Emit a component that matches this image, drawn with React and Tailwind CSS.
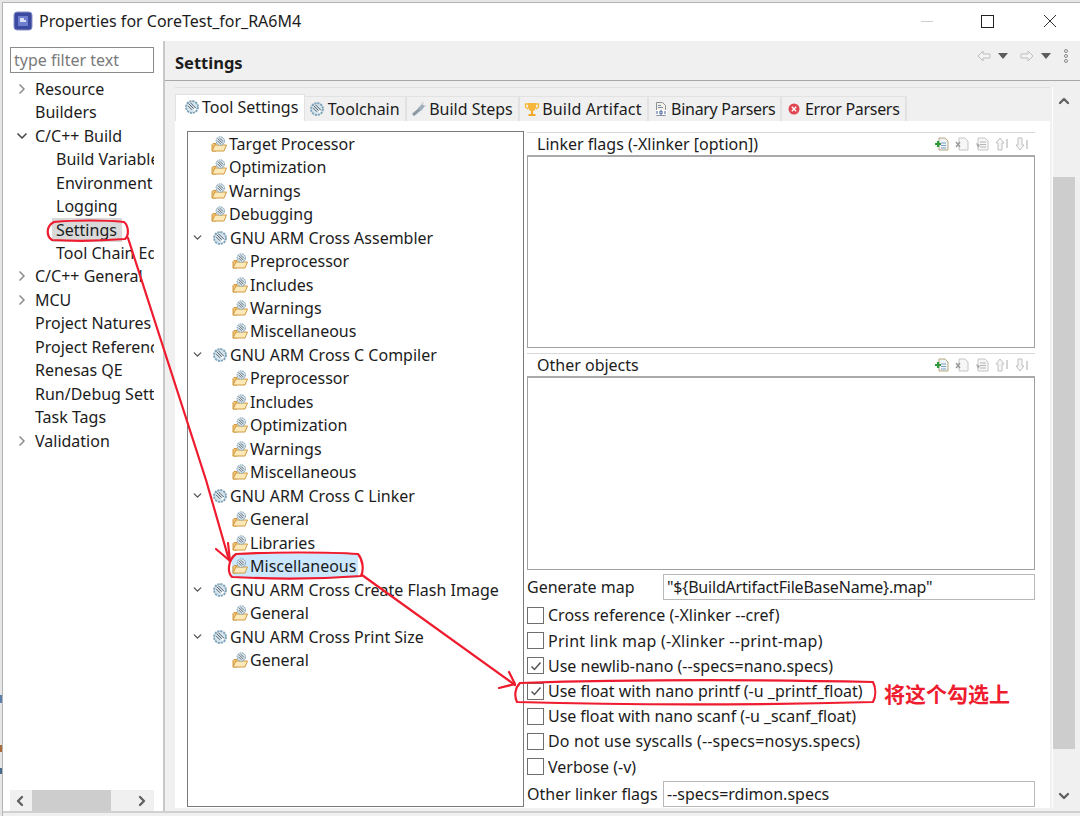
import { Fragment } from "react";
import { ChevronRight, ChevronDown, ChevronUp, ChevronLeft } from "lucide-react";

const leftTree = [
  { label: "Resource", arrow: "right" },
  { label: "Builders" },
  { label: "C/C++ Build", arrow: "down" },
  { label: "Build Variables", sub: true },
  { label: "Environment", sub: true },
  { label: "Logging", sub: true },
  { label: "Settings", sub: true, selected: true },
  { label: "Tool Chain Editor", sub: true },
  { label: "C/C++ General", arrow: "right" },
  { label: "MCU", arrow: "right" },
  { label: "Project Natures" },
  { label: "Project References" },
  { label: "Renesas QE" },
  { label: "Run/Debug Settings" },
  { label: "Task Tags" },
  { label: "Validation", arrow: "right" },
];

const settingsTree = [
  { label: "Target Processor", top: true },
  { label: "Optimization", top: true },
  { label: "Warnings", top: true },
  { label: "Debugging", top: true },
  { label: "GNU ARM Cross Assembler", tool: true },
  { label: "Preprocessor" },
  { label: "Includes" },
  { label: "Warnings" },
  { label: "Miscellaneous" },
  { label: "GNU ARM Cross C Compiler", tool: true },
  { label: "Preprocessor" },
  { label: "Includes" },
  { label: "Optimization" },
  { label: "Warnings" },
  { label: "Miscellaneous" },
  { label: "GNU ARM Cross C Linker", tool: true },
  { label: "General" },
  { label: "Libraries" },
  { label: "Miscellaneous", selected: true },
  { label: "GNU ARM Cross Create Flash Image", tool: true },
  { label: "General" },
  { label: "GNU ARM Cross Print Size", tool: true },
  { label: "General" },
];

const options = [
  { label: "Cross reference (-Xlinker --cref)" },
  { label: "Print link map (-Xlinker --print-map)", track: "tracking-[0.26px]" },
  { label: "Use newlib-nano (--specs=nano.specs)", checked: true },
  { label: "Use float with nano printf (-u _printf_float)", checked: true },
  { label: "Use float with nano scanf (-u _scanf_float)", track: "tracking-[-0.06px]" },
  { label: "Do not use syscalls (--specs=nosys.specs)", track: "tracking-[0.15px]" },
  { label: "Verbose (-v)" },
];

function ToolIcon({ className = "" }) {
  return (
    <svg viewBox="0 0 16 16" className={`w-4 h-4 shrink-0 ${className}`}>
      <circle cx="8" cy="8" r="6" fill="#d5e3ec" stroke="#7ea3b8" strokeWidth="1.800" strokeDasharray="2.200 0.900" />
      <path d="M4.500 4.500l6.500 6.500M6.500 3.800l5.500 5.500M4 6.800l4 4" stroke="#5a6772" strokeWidth="1" />
      <circle cx="10.500" cy="10.500" r="1.200" fill="#fff" />
    </svg>
  );
}

function FolderIcon({ className = "" }) {
  return (
    <svg viewBox="0 0 16 16" className={`w-4 h-4 shrink-0 ${className}`}>
      <path d="M1 15V8.500l1-1h3v7.500z" fill="#f0c272" stroke="#d09a42" />
      <path d="M1 15l3-6h11.500L13 15z" fill="#fde9b8" stroke="#d09a42" />
      <circle cx="9.300" cy="5" r="4.200" fill="#dbe7ee" stroke="#7c9fb3" strokeDasharray="1.800 0.700" />
      <path d="M7 2.800l4.500 4.500M8.800 2.200l3.200 3.200M6.500 4.800l3 3" stroke="#56636e" strokeWidth="0.900" />
    </svg>
  );
}

function WrenchIcon() {
  return (
    <svg viewBox="0 0 16 16" className="w-4 h-4 shrink-0">
      <path d="M2 14l7-6" stroke="#8d9ba6" strokeWidth="3" />
      <path d="M7 7l4-4 3 2-4 5z" fill="#9fb0bc" />
      <path d="M10 2h3M13 5h2" stroke="#c2cdd5" />
    </svg>
  );
}

function TrophyIcon() {
  return (
    <svg viewBox="0 0 16 16" className="w-4 h-4 shrink-0">
      <path d="M4 2h8v5l-2 3H6L4 7z" fill="#f6b73c" />
      <path d="M4 3H1.500v3L4 8M12 3h2.500v3L12 8" fill="none" stroke="#f6b73c" strokeWidth="1.300" />
      <path d="M7 10h2v3H7zM4.500 13h7v2h-7z" fill="#f0a92c" />
    </svg>
  );
}

function BinaryIcon() {
  return (
    <svg viewBox="0 0 16 16" className="w-4 h-4 shrink-0">
      <path d="M3.500 1.500h6l3 3v10h-9z" fill="#f4f1e6" stroke="#8a8f9c" />
      <path d="M5 4.500h3M5 6.500h5" stroke="#7b8aa5" />
      <path d="M3 9h11v5H3z" fill="#fff" />
      <path d="M4 10v3M7 10h2v3H7zM12 10v3" stroke="#3d5a92" fill="none" />
    </svg>
  );
}

function ErrorIcon() {
  return (
    <svg viewBox="0 0 16 16" className="w-4 h-4 shrink-0">
      <circle cx="8" cy="8" r="5.500" fill="#e0464f" />
      <path d="M5.800 5.800l4.400 4.400M10.200 5.800l-4.400 4.400" stroke="#fff" strokeWidth="1.400" />
    </svg>
  );
}

function NavIcons() {
  return (
    <div className="ml-auto mr-[11px] mb-[14px] flex items-center gap-[7px]">
      <svg viewBox="0 0 14 12" className="w-[14px] h-3">
        <path d="M6 1L1 6l5 5V8h7V4H6z" fill="#f4f4f4" stroke="#bdbdbd" />
      </svg>
      <svg viewBox="0 0 10 6" className="w-[10px] h-[6px] mr-[5px]">
        <path d="M0 0h10L5 6z" fill="#5c5c5c" />
      </svg>
      <svg viewBox="0 0 14 12" className="w-[14px] h-3">
        <path d="M8 1l5 5-5 5V8H1V4h7z" fill="#f4f4f4" stroke="#bdbdbd" />
      </svg>
      <svg viewBox="0 0 10 6" className="w-[10px] h-[6px] mr-[5px]">
        <path d="M0 0h10L5 6z" fill="#5c5c5c" />
      </svg>
      <svg viewBox="0 0 6 14" className="w-[6px] h-[14px]">
        <circle cx="3" cy="2" r="1.500" fill="none" stroke="#8a8a8a" />
        <circle cx="3" cy="7" r="1.500" fill="none" stroke="#8a8a8a" />
        <circle cx="3" cy="12" r="1.500" fill="none" stroke="#8a8a8a" />
      </svg>
    </div>
  );
}

function ListTools() {
  return (
    <div className="ml-auto mr-[6px] flex items-center gap-[6px]">
      <svg viewBox="0 0 14 14" className="w-[14px] h-[14px]">
        <path d="M4 1h6l3 3v9H4z" fill="#eef3f6" stroke="#b7a77e" />
        <path d="M6 6h5M6 8.500h5M6 11h5" stroke="#7ba0c0" />
        <path d="M3 4v6M0 7h6" stroke="#2f9a3c" strokeWidth="2.200" />
      </svg>
      <svg viewBox="0 0 14 14" className="w-[14px] h-[14px]">
        <path d="M4 1h6l3 3v9H4z" fill="#f6f6f6" stroke="#c6c6c6" />
        <path d="M1 5l4 5M5 5l-4 5" stroke="#9c9c9c" strokeWidth="1.500" />
      </svg>
      <svg viewBox="0 0 14 14" className="w-[14px] h-[14px]">
        <path d="M3 1h7l3 3v9H3z" fill="#f6f6f6" stroke="#c6c6c6" />
        <path d="M5 5h6M5 7.500h6M5 10h6" stroke="#b5b5b5" />
        <path d="M1 6l4 2-2 3z" fill="#a8a8a8" />
      </svg>
      <svg viewBox="0 0 14 14" className="w-[14px] h-[14px]">
        <path d="M5 1l4 5H7v7H3V6H1z" fill="#f6f6f6" stroke="#c0c0c0" />
        <path d="M12 2v9" stroke="#c6c6c6" strokeWidth="1.500" />
      </svg>
      <svg viewBox="0 0 14 14" className="w-[14px] h-[14px]">
        <path d="M5 13l4-5H7V1H3v7H1z" fill="#f6f6f6" stroke="#c0c0c0" />
        <path d="M12 3v9" stroke="#c6c6c6" strokeWidth="1.500" />
      </svg>
    </div>
  );
}

function ListPane({ title, height }) {
  return (
    <div className="flex flex-col">
      <div className="h-[25px] flex items-center pl-[10px] border-t border-[#d8d8d8] border-b-2 border-b-[#a9a9a9]">
        <span>{title}</span>
        <ListTools />
      </div>
      <div className={`${height} border border-[#a0a0a0] border-t-0 bg-white`} />
    </div>
  );
}

const Tab = ({ icon, label, active, track = "" }) => (
  <div
    className={
      active
        ? "h-[27px] -mt-[2px] pb-[2px] flex items-center gap-[2px] pl-[8px] pr-[6px] bg-white border-t border-x border-[#e2e2e2]"
        : "h-[25px] flex items-center gap-[2.5px] pl-[4px] pr-[5px] bg-[#f0f0f0] border-r-2 border-t border-[#e2e2e2]"
    }
  >
    {icon}
    <span className={track}>{label}</span>
  </div>
);

const Redline = () => (
  <svg className="absolute inset-0 pointer-events-none" width="1080" height="816" viewBox="0 0 1080 816" fill="none">
    <g stroke="#ee1c2e" strokeWidth="2.200" strokeLinecap="round" strokeLinejoin="round">
      {/* Settings ring */}
      <path d="M54 222C75 220 105 220 124 222C129 226 129 236 125 239C100 241 70 241 52 240C46 236 46 226 54 222Z" />
      <path d="M128 238L206 480L229 560" />
      <path d="M216 549L230 561L228 543" />
      {/* Miscellaneous ring */}
      <path d="M236 554C270 552 330 552 358 554C363 560 364 570 361 576C320 579 270 579 232 577C227 572 228 560 236 554Z" />
      <path d="M362 575L515 685" />
      <path d="M499 688L515 684L509 672" />
      {/* float option ring */}
      <path d="M520 683C640 679 780 680 873 682C876 688 876 696 873 702C760 705 620 705 517 702C514 696 515 688 520 683Z" />
    </g>
  </svg>
);

export default function App() {
  return (
    <div
      className="relative w-[1080px] h-[816px] overflow-hidden flex pt-[2px] pl-[2px] bg-[#e6e6e6] text-[16px] text-[#1c1c1c]"
      style={{ fontFamily: '"Noto Sans", "Open Sans", sans-serif' }}
    >
      {/* bits of the desktop behind the dialog */}
      <div className="absolute left-0 top-[695px] w-[2px] h-[8px] bg-[#5b7fa8]" />
      <div className="absolute left-0 top-[745px] w-[2px] h-[7px] bg-[#a86a3a]" />
      <div className="absolute left-0 top-[768px] w-[2px] h-[6px] bg-[#4a6a8a]" />

      <div className="flex-1 min-w-0 flex flex-col bg-[#f0f0f0] border-t border-l border-[#b4b4b4]">
        {/* Title bar */}
        <div className="h-[38px] pb-[2px] bg-white flex items-center shrink-0">
          <svg viewBox="0 0 20 20" className="w-5 h-5 ml-[10px] mr-[6px]">
            <rect x="1" y="1" width="18" height="18" rx="3" fill="#3b4aa0" stroke="#8c93c8" />
            <rect x="5" y="5" width="10" height="10" fill="#6f7fd0" />
            <path d="M7 10h6M7 8h4" stroke="#fff" strokeWidth="1.500" />
          </svg>
          <span>Properties for CoreTest_for_RA6M4</span>
          <div className="ml-auto flex items-center">
            <div className="w-3 h-px bg-[#cfcfcf] mr-[48px]" />
            <div className="w-[13px] h-[13px] border border-[#222] mr-[49px]" />
            <svg viewBox="0 0 14 14" className="w-[14px] h-[14px] mr-[23px]">
              <path d="M1 1l12 12M13 1L1 13" stroke="#333" strokeWidth="1" />
            </svg>
          </div>
        </div>

        <div className="flex flex-1 min-h-0">
          {/* Left filter panel */}
          <div className="w-[162px] shrink-0 bg-white flex flex-col pl-[7px] pr-[9px] pt-[6px] border-r-2 border-[#c8c8c8]">
            <div className="h-[26px] border border-[#8a8a8a] flex items-center pl-[3px] text-[#7a7a7a] shrink-0">type filter text</div>
            <div className="mt-[4px] flex-1 overflow-hidden">
              {leftTree.map((item) => (
                <div key={item.label} className="relative h-[23.47px] flex items-center whitespace-nowrap">
                  {item.arrow === "right" && <ChevronRight size={16} strokeWidth={2.500} className="absolute left-[4px] text-[#8f8f8f]" />}
                  {item.arrow === "down" && <ChevronDown size={16} strokeWidth={2.500} className="absolute left-[4px] text-[#4a4a4a]" />}
                  {item.selected ? (
                    <span className="ml-[42px] pl-[4px] pr-[5px] bg-[#d9d9d9]">{item.label}</span>
                  ) : (
                    <span className={item.sub ? "ml-[46px]" : "ml-[25px]"}>{item.label}</span>
                  )}
                </div>
              ))}
            </div>
            <div className="h-[21px] bg-[#f0f0f0] flex items-center shrink-0">
              <ChevronLeft size={16} strokeWidth={3.500} className="ml-[2px] text-[#606060]" />
              <div className="w-[79px] h-full bg-[#cdcdcd] ml-[4px] mr-auto" />
              <ChevronRight size={16} strokeWidth={3.500} className="mr-[4px] text-[#606060]" />
            </div>
          </div>

          {/* Right page */}
          <div className="flex-1 min-w-0 flex flex-col bg-[#f0f0f0] pb-[3px]">
            <div className="h-[40px] pt-[5px] flex items-center pl-[10px] border-b border-[#a8a8a8] shrink-0">
              <span className="font-bold text-[16.5px]">Settings</span>
              <NavIcons />
            </div>
            <div className="flex flex-1 min-h-0 pt-[6px] pl-[10px]">
              <div className="w-[875px] flex flex-col border-t border-[#e0e0e0] pt-[8px]">
                <div className="flex h-[25px] shrink-0 items-end">
                  <Tab active icon={<ToolIcon />} label="Tool Settings" />
                  <Tab icon={<ToolIcon />} label="Toolchain" />
                  <Tab icon={<WrenchIcon />} label="Build Steps" />
                  <Tab icon={<TrophyIcon />} label="Build Artifact" track="tracking-[0.15px]" />
                  <Tab icon={<BinaryIcon />} label="Binary Parsers" track="tracking-[-0.3px]" />
                  <Tab icon={<ErrorIcon />} label="Error Parsers" track="tracking-[-0.3px]" />
                </div>
                <div className="flex-1 min-h-0 bg-white flex pt-[10px] pl-[12px] pb-[1px] overflow-hidden">
                  {/* Tool tree */}
                  <div className="w-[337px] shrink-0 border border-[#7a7a7a]">
                    {settingsTree.map((item, i) => (
                      <div key={i} className="relative h-[23.47px] flex items-center whitespace-nowrap">
                        {item.tool && <ChevronDown size={13} strokeWidth={2.500} className="absolute left-[3px] text-[#555]" />}
                        {item.tool ? (
                          <Fragment>
                            <ToolIcon className="ml-[24px] mr-[2px]" />
                            <span>{item.label}</span>
                          </Fragment>
                        ) : (
                          <div className={`flex items-center h-full ${item.top ? "ml-[23px]" : "ml-[44px]"} ${item.selected ? "bg-[#cce8ff] pr-[2px]" : ""}`}>
                            <FolderIcon className="mr-[2px]" />
                            <span>{item.label}</span>
                          </div>
                        )}
                      </div>
                    ))}
                  </div>

                  {/* Option panel */}
                  <div className="w-[508px] ml-[3px] mt-[1px] flex flex-col">
                    <ListPane title="Linker flags (-Xlinker [option])" height="h-[191px]" />
                    <div className="h-[5px]" />
                    <ListPane title="Other objects" height="h-[192px]" />
                    <div className="h-[31px] flex items-center mt-[2px]">
                      <span className="w-[136px] shrink-0">Generate map</span>
                      <div className="flex-1 h-[26px] border border-[#b8b8b8] pl-[3px] flex items-center tracking-[-0.2px]">"${"{"}BuildArtifactFileBaseName{"}"}.map"</div>
                    </div>
                    {options.map((opt) => (
                      <div key={opt.label} className="h-[25.3px] flex items-center gap-[4px] whitespace-nowrap">
                        <div className="w-[17px] h-[17px] border border-[#6e6e6e] flex items-center justify-center shrink-0 bg-white">
                          {opt.checked && (
                            <svg viewBox="0 0 12 12" className="w-3 h-3">
                              <path d="M1.500 6.500l3 3 6-7" fill="none" stroke="#555" strokeWidth="1.500" />
                            </svg>
                          )}
                        </div>
                        <span className={opt.track}>{opt.label}</span>
                      </div>
                    ))}
                    <div className="h-[27px] mt-[1px] flex items-center">
                      <span className="w-[136px] shrink-0">Other linker flags</span>
                      <div className="flex-1 h-[26px] border border-[#b8b8b8] pl-[3px] flex items-center">--specs=rdimon.specs</div>
                    </div>
                  </div>
                </div>
              </div>
              {/* Vertical scrollbar */}
              <div className="w-[23px] ml-[2px] border-l border-white flex flex-col items-center">
                <ChevronUp size={16} strokeWidth={3.500} className="mt-[6px] text-[#606060] shrink-0" />
                <div className="w-full h-[572px] mt-[68px] bg-[#cdcdcd] shrink-0" />
                <ChevronDown size={16} strokeWidth={3.500} className="mt-auto mb-[4px] text-[#606060] shrink-0" />
              </div>
            </div>
          </div>
        </div>
        <div className="h-[5px] shrink-0 bg-[#f0f0f0] border-t-2 border-[#d0d0d0]" />
      </div>

      <Redline />
      <div
        className="absolute left-[884px] top-[679px] text-[21px] leading-[28px] font-bold text-[#ee1c2e] whitespace-nowrap"
        style={{ fontFamily: '"Noto Sans CJK SC", sans-serif' }}
      >
        将这个勾选上
      </div>
    </div>
  );
}
